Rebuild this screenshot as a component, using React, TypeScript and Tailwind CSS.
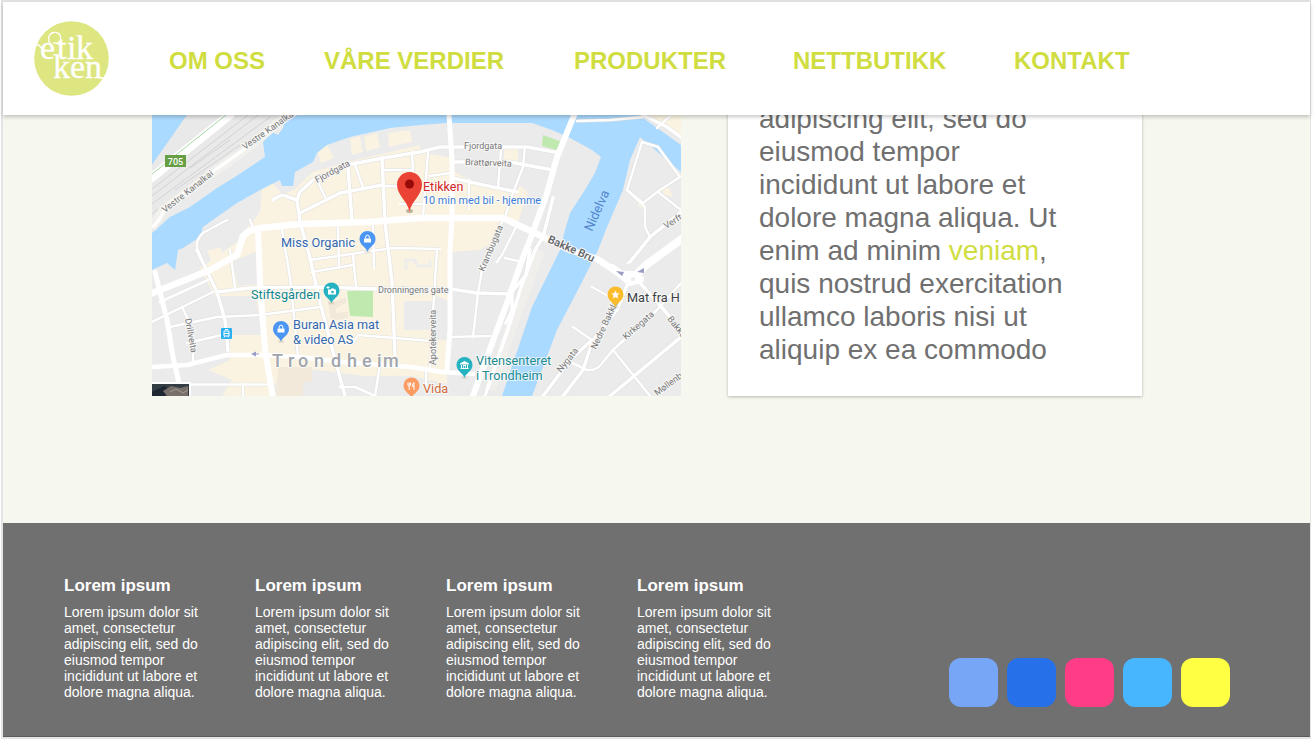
import React from "react";

const NAV = ["OM OSS", "VÅRE VERDIER", "PRODUKTER", "NETTBUTIKK", "KONTAKT"];

const FOOTER_COLUMNS = [1, 2, 3, 4];

const SOCIAL = [
  { label: "Discord", color: "bg-[#77a6f7]" },
  { label: "Facebook", color: "bg-[#2671ea]" },
  { label: "Instagram", color: "bg-[#ff3d87]" },
  { label: "Twitter", color: "bg-[#48b6ff]" },
  { label: "Snapchat", color: "bg-[#ffff44]" },
];

function Logo() {
  return (
    <svg viewBox="0 0 75 75" className="size-[75px] shrink-0" role="img" aria-label="etikken">
      <circle cx="37.5" cy="37.5" r="37.3" fill="#dde680" />
      <g fill="#fff" stroke="#fff" strokeWidth=".3" fontFamily="Liberation Serif, serif" fontSize="34">
        <text x="6" y="38">e</text>
        <text x="23" y="38">t</text>
        <text x="33" y="38">i</text>
        <text x="42" y="38">k</text>
        <text x="19" y="57">ken</text>
      </g>
      <g fill="none" stroke="#fff" strokeWidth="1.4" strokeLinecap="round">
        <path d="M1 24.500C4 23 5 24 7 26.500Q8 28 9.500 27.500" />
        <path d="M16.500 24C13.500 19 14 13 19.500 11.500C25 10.500 27.500 15 26.500 18.500C25.500 22.500 22 23 19.500 21.500" />
        <path d="M66 57H70" />
      </g>
    </svg>
  );
}

const MINOR = [
  "M318 182L325 197", "M355 165L363 187", "M383 170H412", "M412 152L413 172", "M428 152L423 217", "M386 186L410 187",
  "M400 204H426", "M430 176L450 173", "M525 147L523 167L513 193L505 217", "M501 150L498 188", "M469 180V209",
  "M503 220L490 247L482 270L478 293L473 337", "M517 225L502 255L497 262", "M450 337L490 336", "M505 258L522 262",
  "M160 302L208 280", "M152 322L213 292", "M170 327L217 317L260 315L320 307", "M230 250L235 287",
  "M190 384.500H267", "M243 384V396", "M227 220L203 233Q196 240 197 247L200 257", "M282 230L290 277L298 357",
  "M338 227L339 267", "M373 225L374 268", "M310 260L393 248L440 249", "M312 272L353 265", "M353 255L356 287",
  "M437 250L432 328L430 367", "M187 343L222 335", "M182 307L193 330V360", "M353 343L358 335L420 340L430 341",
  "M340 387L355 387L375 396", "M380 365L375 396", "M250 220L254 230", "M426 370V385",
  "M592 287L612 298", "M573 327L592 340", "M570 362L587 370Q598 371 603 362L613 350L657 310L681 283",
  "M628 263L640 250L650 237L645 227V207L627 190", "M642 142L658 147L680 177L660 190L643 203L627 190L642 142",
  "M658 192L681 210", "M613 350L650 396", "M577 121L610 120L643 117", "M670 116L657 128",
];

const MEDIUM = [
  "M273 200Q282 193 288 197L297 200L300 192L313 180L347 165L383 158L420 152L440 147L527 147L560 153",
  "M297 200L300 222L310 258L320 302L332 348L345 396", "M348 168L352 222", "M382 158L385 222L392 282L395 355",
  "M300 213L340 193L382 185", "M453 162H510L553 170", "M453 178L483 185L517 192",
  "M217 292L250 288L323 287L377 289H450L477 293L510 294", "M197 250L217 292L225 320L228 350",
  "M553 198L543 237L535 250L520 290L510 323L485 396", "M530 250L526 275L512 292V310L506 323",
  "M628 283L617 310L593 340L583 370L563 396", "M592 340L570 360L543 396", "M640 283L658 303L681 330",
  "M610 396L681 337", "M630 262L650 237L681 212", "M643 115L667 127L681 137",
];

const RAILS = [
  "M152 196L258 115", "M152 204L270 117", "M152 189L248 115", "M160 210L283 115", "M152 214L205 172",
  "M190 168L230 140", "M175 190L240 145",
];

type Street = [string, number, number, number, number];

const STREETS: Street[] = [
  ["Vestre Kanalkai", 165, 213, -38, 9],
  ["Vestre Kanalkai", 245, 150, -35, 9],
  ["Fjordgata", 317, 183, -28, 9],
  ["Fjordgata", 464, 149, 0, 9],
  ["Brattørveita", 465, 165, 2, 9],
  ["Dronningens gate", 378, 293, 0, 9],
  ["Krambugata", 484, 272, -67, 9],
  ["Apotekerveita", 436, 365, -90, 9],
  ["Drillveita", 185, 319, 80, 9],
  ["Nedre Bakklan", 596, 350, -65, 9],
  ["Kirkegata", 626, 340, -41, 9],
  ["Nygata", 561, 373, -52, 9],
  ["Bakke", 667, 319, 52, 9],
  ["Møllenb", 657, 396, -36, 9],
  ["Verfts", 666, 229, -31, 9],
];

function Pin({ x, y, color, children }: { x: number; y: number; color: string; children?: React.ReactNode }) {
  return (
    <g transform={`translate(${x} ${y})`}>
      <ellipse cx="0" cy="11.500" rx="3" ry="1.500" fill="#b9ad8f" opacity=".3" />
      <path d="M0 12C-1 7-8 5.500-8-1A8 8 0 1 1 8-1C8 5.500 1 7 0 12Z" fill={color} />
      {children}
    </g>
  );
}

function Bag() {
  return (
    <g>
      <path d="M-3.500-1.500H3.500V2.500H-3.500Z" fill="#fff" />
      <path d="M-1.800-1.500V-3A1.800 1.800 0 0 1 1.800-3V-1.500" fill="none" stroke="#fff" strokeWidth="1" />
    </g>
  );
}

function CityMap() {
  return (
    <svg viewBox="152 115 529 281" className="block w-full" role="img" aria-label="Kart over Trondheim" fontFamily="Roboto, sans-serif">
      <rect x="152" y="115" width="529" height="281" fill="#ebebeb" />

      <g fill="#faf3e1">
        <path d="M262 190L272 183L283 195L296 188L313 172L347 162L420 145V152L452 158L455 172L470 180L514 195L520 186L528 192L518 222L503 218L492 243L480 250L452 252V302L436 296V340H447V384L412 376H300L304 396H222L232 380L208 370L230 360V335H262L256 296H215L200 268L243 238L247 228L260 212Z" />
        <path d="M317 150L326 143L334 158L321 163Z" />
        <path d="M350 139L360 136L363 152L352 155ZM364 137L377 133L380 148L366 151ZM388 133L410 130L412 142L389 147Z" />
        <path d="M505 147H518V164H503Z" />
        <path d="M643 115H681V140L667 128Z" />
        <path d="M637 205L645 202L647 212ZM660 188L669 188L673 197L664 195Z" />
        <path d="M207 251L220 247L224 256L212 262Z" />
      </g>
      <g fill="#ebebeb">
        <path d="M404 301H445V330H404ZM273 386L295 367L380 378V396H276Z" />
        <path d="M453 256L492 252V300H453ZM233 261L258 251V284L238 286Z" />
      </g>
      <g fill="#f2e9da">
        <path d="M327 297L334 302L346 297V303L336 308V313L348 312V318L331 321Z" />
        <path d="M278 367H312V382H303V396H276Z" />
      </g>
      <path d="M406 270V260H415L417 266H430V260" fill="none" stroke="#ededeb" strokeWidth="3" />

      <path d="M347 291H373V317L350 316Z" fill="#bfe9ae" />

      <g fill="#aadaff">
        <path d="M152 115H187L152 165Z" />
        <path d="M293 115L285 120L283 128L278 135L272 132L263 142L265 157L238 175L217 188L190 207L170 217L152 233V270L167 263L175 270L178 250L183 248L200 237L203 227L217 217L237 203L260 190L280 180L282 186H293L295 172L313 162L317 153L327 145L350 137L390 128L420 125L447 123H532L552 130L570 138L592 150L601 157L595 173L583 193L570 213L565 230L560 250L532 307L502 396H532L557 330L583 280L598 250L607 227L623 190L630 160L640 137L681 172V145L667 135L643 118L640 115Z" />
      </g>
      <path d="M543 135L562 142L560 151L542 146Z" fill="#bfe9ae" />

      <path d="M187 115H285L282 121L152 223V165Z" fill="#e9e9e9" />
      <g fill="none" stroke="#d2d2d4" strokeWidth="1">
        {RAILS.map((d) => <path key={d} d={d} />)}
      </g>
      <path d="M150 179L232 113" fill="none" stroke="#fff" strokeWidth="9" />
      <path d="M152 174L226 115" fill="none" stroke="#a5d6a7" strokeWidth="1" />
      <path d="M152 228L163 210L205 178L245 150L290 113" fill="none" stroke="#f3f1ed" strokeWidth="9" />
      <path d="M152 227Q160 222 165 207L205 177L245 149L290 113" fill="none" stroke="#fff" strokeWidth="3" />

      <g fill="none" stroke="#dedede" strokeLinejoin="round">
        <g strokeWidth="3.500">{MINOR.map((d) => <path key={d} d={d} />)}</g>
        <g strokeWidth="4.500">{MEDIUM.map((d) => <path key={d} d={d} />)}</g>
      </g>
      <path d="M540 250L512 325L490 390" fill="none" stroke="#f1efeb" strokeWidth="11" />
      <g fill="none" stroke="#fff" strokeLinejoin="round" strokeLinecap="round">
        <g strokeWidth="2.500">{MINOR.map((d) => <path key={d} d={d} />)}</g>
        <g strokeWidth="3.500">{MEDIUM.map((d) => <path key={d} d={d} />)}</g>
        <path strokeWidth="4.500" d="M150 367L187 365L227 355H263L300 357L343 362L410 367L443 372L473 374" />
        <path strokeWidth="5" d="M155 272L167 320L173 357L182 396" />
        <path strokeWidth="5" d="M449 115L452 160V217L450 250V330L447 370" />
        <path strokeWidth="6" d="M575 113L557 157L547 193L533 232L522 260L507 303L487 357L473 396" />
        <path strokeWidth="6.500" d="M150 294L210 270L237 255L243 236Q250 229 260 228L300 224L367 222L420 218H503L533 232L570 250L597 259L617 272" />
        <path strokeWidth="6" d="M258 230L260 283L265 350L273 398" />
        <path strokeWidth="8" d="M612 268L622 275H636L646 265L683 238M622 275L630 282L640 279" />
      </g>
      <circle cx="633" cy="279" r="2" fill="#ebebeb" />
      <g fill="#9a9cc4">
        <path d="M616 271L624 272L622 276Z M637 272L644 268V273Z M251 354L256 351.500V356.500Z" />
        <path d="M255 353.500H259V354.500H255Z" />
      </g>

      <rect x="152" y="382" width="39" height="14" fill="#fff" />
      <rect x="152" y="384" width="37" height="12" fill="#343c44" />
      <path d="M152 392L164 386L171 390L165 396H152Z" fill="#1d2731" />
      <path d="M163 391L171 386L180 388L188 386V396H167Z" fill="#77706a" />
      <path d="M170 392L176 389L183 393L188 390" fill="none" stroke="#a69a91" strokeWidth="1" />

      <rect x="165" y="155" width="21" height="12" fill="#689f45" />
      <text x="175.500" y="164.500" textAnchor="middle" fontSize="9" fontWeight="500" fill="#fff">705</text>

      <g fill="#77787a" stroke="#f7f7f5" strokeWidth="2" paintOrder="stroke" strokeLinejoin="round">
        {STREETS.map(([name, x, y, angle, size]) => (
          <text key={`${name}${x}`} x={x} y={y} fontSize={size} transform={`rotate(${angle} ${x} ${y})`}>{name}</text>
        ))}
        <text x="547" y="242" fontSize="11" fontWeight="500" fill="#5f6368" transform="rotate(24 547 242)">Bakke Bru</text>
      </g>
      <text x="592" y="232" fontSize="13" fill="#5286cc" transform="rotate(-66 592 232)">Nidelva</text>

      <rect x="221" y="328" width="11" height="11" rx="1" fill="#2bb0f2" />
      <path d="M224 331H229V336H224ZM225 329.500H228M224 337.500L225 336M229 337.500L228 336" fill="none" stroke="#fff" strokeWidth="1" />
      <path d="M224 333.500H229" stroke="#fff" strokeWidth="1" />

      <Pin x={367.500} y={240} color="#4b96f3"><Bag /></Pin>
      <Pin x={281} y={330} color="#4b96f3"><Bag /></Pin>
      <Pin x={331.500} y={291.500} color="#26b3c1">
        <path d="M-3.500-2H-1L0-3H2.500L3-2H4.500V3H-3.500Z" fill="#fff" />
        <circle cx="1" cy=".5" r="1.300" fill="#26b3c1" />
        <path d="M-5-4H-2M-3.500-5.500V-2.500" stroke="#fff" strokeWidth="1" />
      </Pin>
      <Pin x={464.500} y={366} color="#26b3c1">
        <path d="M-4.500-2.500L0-5L4.500-2.500V-1.500H-4.500ZM-4 2H4V3H-4ZM-3.500-1H-2.500V2H-3.500ZM2.500-1H3.500V2H2.500ZM-1.500-1H1.500V0H-1.500ZM-1.500-1H-.8V2H-1.500ZM.8-1H1.500V2H.8Z" fill="#fff" />
      </Pin>
      <Pin x={411.500} y={386.500} color="#fc9b62">
        <path d="M-3.500-4V-1.500Q-3.500-.5-2.300-.5V3.500M-2.300-4V-1M-1-4V-1.500Q-1-.5-2.300-.5M2.500 3.500V-4Q.8-3 1 0H2.500" fill="none" stroke="#fff" strokeWidth="1" />
      </Pin>
      <Pin x={615.500} y={295.500} color="#fbbc2b">
        <path d="M0-5L1.200-2.300L4-2L1.900 0L2.500 2.900L0 1.400L-2.500 2.900L-1.900 0L-4-2L-1.200-2.300Z" fill="#fff" />
      </Pin>

      <ellipse cx="409.500" cy="211" rx="3.500" ry="2" fill="#9a8d72" opacity=".6" />
      <path d="M409.500 212C408 201 397 196 397 184.500A12.500 12.500 0 0 1 422 184.500C422 196 411 201 409.500 212Z" fill="#ea4335" />
      <circle cx="409.500" cy="184" r="4.500" fill="#960a0a" />

      <g stroke="#fff" strokeWidth="2" strokeOpacity=".7" paintOrder="stroke" strokeLinejoin="round">
        <text x="423" y="190.500" fontSize="12.500" fill="#d0242a">Etikken</text>
        <text x="423" y="204" fontSize="10.800" fill="#3b7dd8">10 min med bil - hjemme</text>
        <g fontSize="12.700">
          <text x="281" y="246.500" fill="#3367ae">Miss Organic</text>
          <text x="251" y="298.500" fill="#0f858c">Stiftsgården</text>
          <text x="293" y="328.500" fill="#3367ae">Buran Asia mat</text>
          <text x="293" y="343.500" fill="#3367ae">&amp; video AS</text>
          <text x="476" y="365" fill="#1b8a92">Vitensenteret</text>
          <text x="476" y="379.500" fill="#1b8a92">i Trondheim</text>
          <text x="423" y="393" fill="#cf6a3a">Vida</text>
          <text x="627" y="301.500" fill="#3c4043">Mat fra H</text>
        </g>
        <text x="272 288 298 314 331 347 362 377 383" y="367" fontSize="18" fontWeight="500" fill="#a0a5ad">Trondheim</text>
      </g>
    </svg>
  );
}

export default function App() {
  return (
    <div className="min-h-screen bg-white pr-1 pl-px font-['Liberation_Sans',Arial,sans-serif]">
      <div className="flex min-h-screen flex-col border-y-2 border-r border-l-2 border-[#e4e4e4] bg-[#f6f7ee]">
        <header className="relative z-10 flex items-center bg-white py-[19px] pl-[31px] shadow-[0_2px_4px_rgba(0,0,0,0.22)]">
          <a href="#hjem" aria-label="etikken"><Logo /></a>
          <nav className="mt-1 ml-[60px] grid grid-cols-[155px_250px_219px_221px_auto] text-2xl leading-7 font-bold whitespace-nowrap text-[#d0dd40]">
            {NAV.map((item) => (
              <a key={item} href="#meny">{item}</a>
            ))}
          </nav>
        </header>

        <main className="grid grow grid-cols-[529fr_414fr] items-start gap-[47px] pr-[168px] pb-[127px] pl-[149px]">
          <CityMap />
          <section className="-mt-[13px] bg-white px-[31px] pb-[30px] shadow-[0_1px_3px_rgba(0,0,0,0.25)]">
            <p className="max-w-[312px] text-[28px] leading-[33px] text-[#707070]">
              adipiscing elit, sed do eiusmod tempor incididunt ut labore et dolore magna aliqua. Ut enim ad minim{" "}
              <a href="#veniam" className="text-[#d0dd40]">veniam</a>, quis nostrud exercitation ullamco laboris nisi ut
              aliquip ex ea commodo
            </p>
          </section>
        </main>

        <footer className="flex items-end justify-between border-b border-[#5c5c5c] bg-[#707070] pt-[53px] pr-20 pb-[29px] pl-[61px] text-white">
          <div className="flex gap-[47px] pb-[7px]">
            {FOOTER_COLUMNS.map((column) => (
              <section key={column} className="w-36">
                <h2 className="text-[17px] leading-5 font-bold">Lorem ipsum</h2>
                <p className="mt-2 text-sm leading-4">
                  Lorem ipsum dolor sit amet, consectetur adipiscing elit, sed do eiusmod tempor incididunt ut labore et
                  dolore magna aliqua.
                </p>
              </section>
            ))}
          </div>
          <div className="flex gap-[9px]">
            {SOCIAL.map((item) => (
              <a key={item.label} href="#sosialt" aria-label={item.label} className={`size-[49px] rounded-xl ${item.color}`} />
            ))}
          </div>
        </footer>
      </div>
    </div>
  );
}
